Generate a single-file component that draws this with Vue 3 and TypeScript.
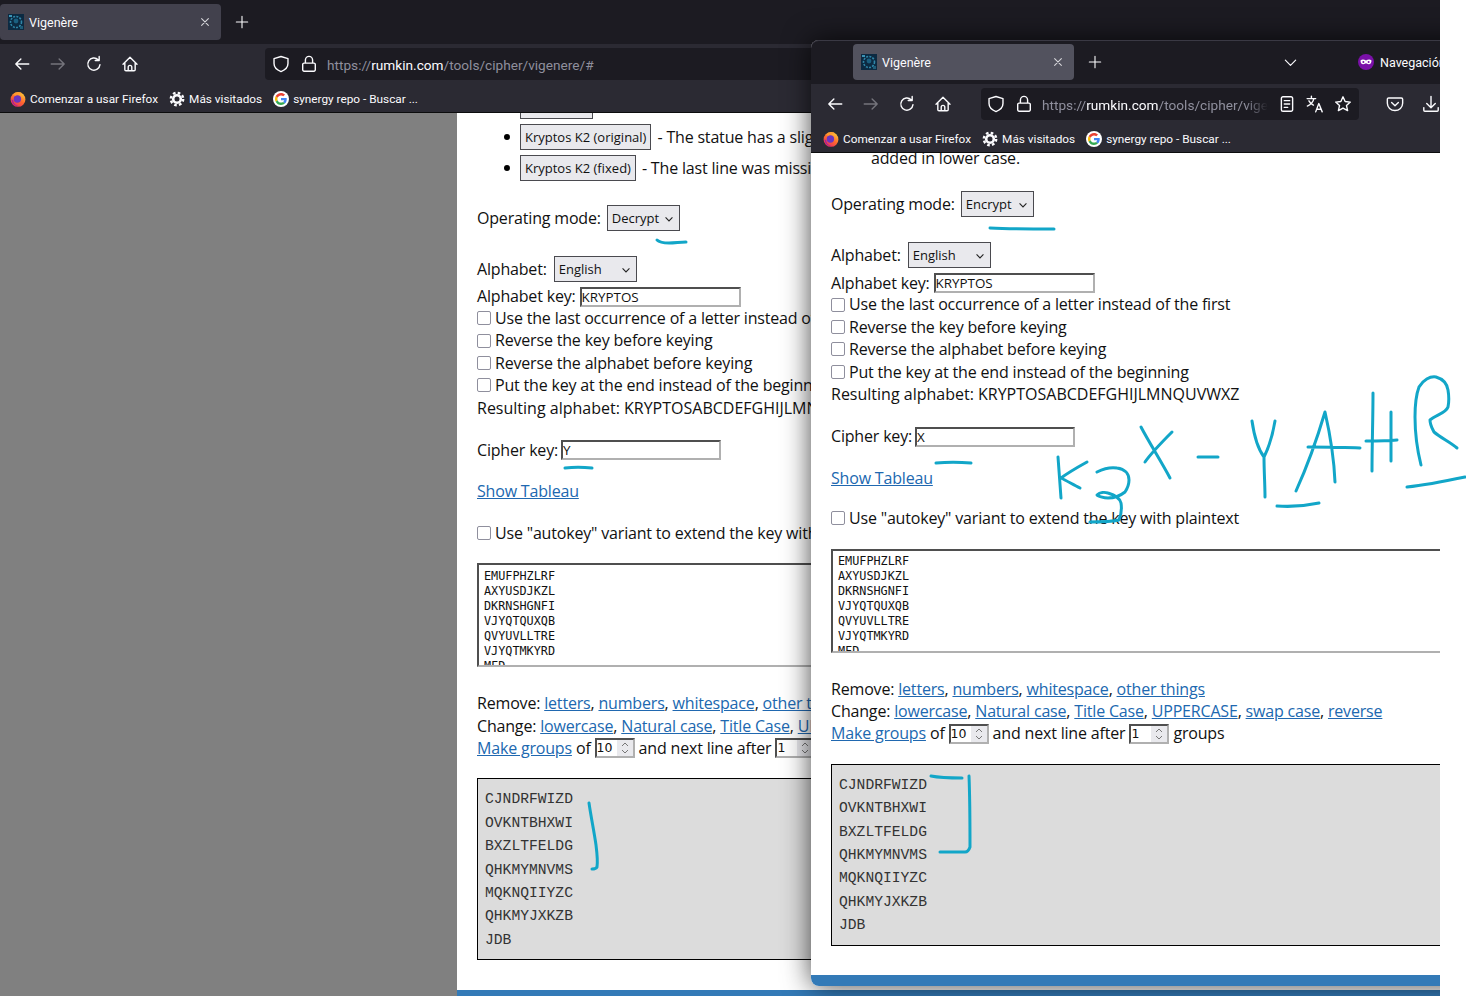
<script setup lang="ts">
const icons: Record<string, string> = {
  back: 'M14 8H2.5M7 3.5 2.5 8 7 12.5',
  forward: 'M2 8h11.5M9 3.5 13.5 8 9 12.5',
  reload: 'M13.3 8.6a5.4 5.4 0 1 1-1.6-4.4M12.6 1.4v3.5H9.1',
  home: 'M1.8 8.2 8 2l6.2 6.2M3.4 7v6a1 1 0 0 0 1 1h7.2a1 1 0 0 0 1-1V7M6.4 14v-3.2a1.6 1.6 0 0 1 3.2 0V14',
  shield: 'M8 1.3 14.2 3.2v4.4c0 3.3-2.4 5.7-6.2 7.1-3.8-1.4-6.2-3.8-6.2-7.1V3.2z',
  lock: 'M3.6 7.2h8.8a1.2 1.2 0 0 1 1.2 1.2v4.8a1.2 1.2 0 0 1-1.2 1.2H3.6a1.2 1.2 0 0 1-1.2-1.2V8.4a1.2 1.2 0 0 1 1.2-1.2zM4.8 7.2V4.4a3.2 3.2 0 0 1 6.4 0v2.8',
  star: 'M8 1.6l1.9 4.2 4.6.5-3.4 3.1 1 4.5L8 11.6l-4.1 2.3 1-4.5L1.5 6.3l4.6-.5z',
  reader: 'M4.4 1.6h7.2a1.4 1.4 0 0 1 1.4 1.4v10a1.4 1.4 0 0 1-1.4 1.4H4.4A1.4 1.4 0 0 1 3 13V3a1.4 1.4 0 0 1 1.4-1.4zM5.6 5h4.8M5.6 8h4.8M5.6 11h3',
  translate: 'M1 3.2h7.6M4.8 1v2.2M7 3.2C6.4 6 4 8.6 1.2 9.8M2.6 5.2c.9 1.7 2.4 3 4 3.8M8.6 15l2.8-7.4L14.4 15M9.6 12.6h3.8',
  pocket: 'M2.4 2.6h11.2A1.2 1.2 0 0 1 14.8 3.8V7.4a6.8 6.4 0 0 1-13.6 0V3.8A1.2 1.2 0 0 1 2.4 2.6zM5 6.6l3 3 3-3',
  download: 'M8 1.2v10M4.2 7.6 8 11.4l3.8-3.8M1.6 11.2v2.4a.9.9 0 0 0 .9.9h11a.9.9 0 0 0 .9-.9v-2.4',
  close: 'M3.5 3.5l9 9M12.5 3.5l-9 9',
  plus: 'M8 1.5v13M1.5 8h13',
  down: 'M2.5 5.5 8 11l5.5-5.5'
}

const windows = [
  { id: 'back', url: 'vigenere/#', mode: 'Decrypt', cipher: 'Y' },
  { id: 'front', url: 'vigenere/#', mode: 'Encrypt', cipher: 'X' }
]

const options = [
  'Use the last occurrence of a letter instead of the first',
  'Reverse the key before keying',
  'Reverse the alphabet before keying',
  'Put the key at the end instead of the beginning'
]

const inputLines = ['EMUFPHZLRF', 'AXYUSDJKZL', 'DKRNSHGNFI', 'VJYQTQUXQB', 'QVYUVLLTRE', 'VJYQTMKYRD', 'MFD']
const outputLines = ['CJNDRFWIZD', 'OVKNTBHXWI', 'BXZLTFELDG', 'QHKMYMNVMS', 'MQKNQIIYZC', 'QHKMYJXKZB', 'JDB']

// pen strokes drawn on top of the screenshot
const strokes = [
  'M657 240c3 3 8 3 12 3 6 0 11-1 17-1',
  'M565 468c8-1 18-1 27 0',
  'M589 803c2 14 5 28 7 42 1 8 2 16 1 22-1 2-3 2-5 2',
  'M990 228c20 1 42 1 64 1',
  'M936 463c10-1 24-1 35 0',
  'M1058 457c1 14 2 28 3 41M1087 462c-9 5-18 10-26 16 6 3 13 7 19 10',
  'M1097 472c6-3 14-5 20-4 8 1 12 6 12 12 0 5-2 9-4 12-5 4-11 6-17 6-4 0-11-2-11-3 3-3 8-3 11-2 7 2 12 6 13 10 1 6 0 12-2 17-9 2-19 2-29 2',
  'M1141 427c9 17 20 34 29 51M1172 432c-9 9-20 20-27 30',
  'M1198 457h20',
  'M1252 421c2 14 6 28 12 36 5-10 9-24 11-36M1264 457c0 14 1 28 1 40',
  'M1296 491c10-22 21-52 29-79 5 22 9 46 10 70M1308 447c17 0 35 0 52 1',
  'M1277 506c14 1 28 0 42-3',
  'M1373 393c0 26-1 52-1 78M1366 441c10 0 21 0 31-1M1391 412v49',
  'M1421 465c-4-16-6-32-6-48 0-11 1-22 4-30 4-7 11-11 17-10 7 2 11 7 12 13 1 6 1 12 0 17-2 6-12 8-18 13 0 5 2 8 4 12 7 6 16 10 23 16',
  'M1407 487c19-2 39-6 58-10',
  'M931 776c10 2 21 2 31 2M969 776c1 24 1 48 1 71-1 3-3 5-5 5-8 0-17 0-25 0'
]
</script>

<template>
  <div class="stage">
    <div class="desktop">
      <section v-for="w in windows" :key="w.id" class="window" :class="w.id">
        <div class="tabbar">
          <div class="tab">
            <svg class="favicon" viewBox="0 0 16 16">
              <rect width="16" height="16" fill="#0c2a42" />
              <circle cx="8" cy="8" r="5.5" fill="none" stroke="#2f86a8" stroke-width="1.6" stroke-dasharray="2 1.2" />
              <circle cx="8" cy="7" r="2.4" fill="#1a5f80" />
              <rect x="1" y="1" width="3" height="2" fill="#3c93b4" />
              <rect x="12" y="12" width="3" height="3" fill="#1d5c78" />
            </svg>
            <span class="tab-title">Vigenère</span>
            <svg class="ico close" viewBox="0 0 16 16"><path :d="icons.close" /></svg>
          </div>
          <svg class="ico new-tab" viewBox="0 0 16 16"><path :d="icons.plus" /></svg>
          <template v-if="w.id === 'front'">
            <svg class="ico tab-list" viewBox="0 0 16 16"><path :d="icons.down" /></svg>
            <svg class="mask" viewBox="0 0 16 16">
              <circle cx="8" cy="8" r="8" fill="#7a10a8" />
              <path d="M2.6 6.2c1.6-.9 3.6-.7 5.4.2 1.8-.9 3.800-1.100 5.400-.2.3 2-.6 4-2.600 4-1.300 0-2-1-2.800-1s-1.500 1-2.800 1c-2 0-2.900-2-2.600-4z" fill="#fff" />
              <circle cx="5.400" cy="8" r="1" fill="#7a10a8" />
              <circle cx="10.600" cy="8" r="1" fill="#7a10a8" />
            </svg>
            <span class="private">Navegación privada</span>
          </template>
        </div>

        <div class="toolbar">
          <div class="nav">
            <span class="cell"><svg class="ico" viewBox="0 0 16 16"><path :d="icons.back" /></svg></span>
            <span class="cell"><svg class="ico dim" viewBox="0 0 16 16"><path :d="icons.forward" /></svg></span>
            <span class="cell"><svg class="ico" viewBox="0 0 16 16"><path :d="icons.reload" /></svg></span>
            <span class="cell"><svg class="ico" viewBox="0 0 16 16"><path :d="icons.home" /></svg></span>
          </div>
          <div class="urlbar">
            <svg class="ico" viewBox="0 0 16 16"><path :d="icons.shield" /></svg>
            <svg class="ico" viewBox="0 0 16 16"><path :d="icons.lock" /></svg>
            <span class="url">https://<b>rumkin.com</b>/tools/cipher/{{ w.url }}</span>
            <template v-if="w.id === 'front'">
              <svg class="ico" viewBox="0 0 16 16"><path :d="icons.reader" /></svg>
              <svg class="ico" viewBox="0 0 16 16"><path :d="icons.translate" /></svg>
              <svg class="ico" viewBox="0 0 16 16"><path :d="icons.star" /></svg>
            </template>
          </div>
          <div v-if="w.id === 'front'" class="tools">
            <svg class="ico" viewBox="0 0 16 16"><path :d="icons.pocket" /></svg>
            <svg class="ico" viewBox="0 0 16 16"><path :d="icons.download" /></svg>
          </div>
        </div>

        <div class="bookmarks">
          <span class="mark ff">
            <svg class="bm-ico" viewBox="0 0 16 16">
              <defs>
                <linearGradient :id="'fx-' + w.id" x1="0.8" y1="0" x2="0.2" y2="1">
                  <stop offset="0" stop-color="#ffd23c" />
                  <stop offset="0.5" stop-color="#ff6a2c" />
                  <stop offset="1" stop-color="#e5246a" />
                </linearGradient>
              </defs>
              <circle cx="8" cy="8.400" r="7.400" :fill="'url(#fx-' + w.id + ')'" />
              <path d="M1.600 8.400C1.600 12 4.500 15 8 15c-3.200-1-4.800-3-4.800-6z" fill="#a3239a" />
              <circle cx="7.400" cy="8" r="3.700" fill="#6a35c0" />
              <path d="M3.200 3.600C5.200 .8 10 .4 12.500 2.600 10 2.100 7.200 2.800 5.800 4.700z" fill="#ff9a2e" />
            </svg>
            Comenzar a usar Firefox
          </span>
          <span class="mark gear">
            <svg class="bm-ico" viewBox="0 0 16 16">
              <circle cx="8" cy="8" r="6.200" fill="none" stroke="#fbfbfe" stroke-width="2.400" stroke-dasharray="2.600 2.270" />
              <circle cx="8" cy="8" r="3.800" fill="none" stroke="#fbfbfe" stroke-width="2.600" />
            </svg>
            Más visitados
          </span>
          <span class="mark goo">
            <svg class="bm-ico" viewBox="-8 -8 64 64">
              <circle cx="24" cy="24" r="32" fill="#fff" />
              <path fill="#EA4335" d="M24 9.500c3.540 0 6.710 1.220 9.210 3.600l6.850-6.850C35.900 2.380 30.470 0 24 0 14.620 0 6.510 5.380 2.560 13.220l7.980 6.190C12.430 13.720 17.740 9.500 24 9.500z" />
              <path fill="#4285F4" d="M46.980 24.550c0-1.570-.15-3.090-.38-4.550H24v9.020h12.940c-.58 2.960-2.260 5.480-4.780 7.180l7.730 6c4.510-4.180 7.090-10.360 7.090-17.650z" />
              <path fill="#FBBC05" d="M10.530 28.590c-.48-1.450-.76-2.990-.76-4.590s.27-3.140.76-4.590l-7.980-6.190C.92 16.460 0 20.120 0 24c0 3.880.92 7.540 2.560 10.780l7.970-6.190z" />
              <path fill="#34A853" d="M24 48c6.480 0 11.930-2.130 15.890-5.810l-7.730-6c-2.150 1.450-4.920 2.300-8.160 2.300-6.260 0-11.570-4.220-13.470-9.910l-7.980 6.190C6.510 42.620 14.620 48 24 48z" />
            </svg>
            synergy repo - Buscar ...
          </span>
        </div>

        <div class="viewport">
          <div v-if="w.id === 'back'" class="gutter"></div>
          <div class="page">
            <div class="content">
              <ul v-if="w.id === 'back'" class="samples">
                <li><span class="btn blank"></span></li>
                <li><span class="btn">Kryptos K2 (original)</span><span class="dash">- The statue has a slight error</span></li>
                <li><span class="btn">Kryptos K2 (fixed)</span><span class="dash">- The last line was missing</span></li>
              </ul>
              <p v-else class="leftover">added in lower case.</p>

              <div class="row mode">
                Operating mode:
                <span class="select mode-select">{{ w.mode }}<svg class="arrow" viewBox="0 0 16 16"><path :d="icons.down" /></svg></span>
              </div>
              <div class="row alpha">
                Alphabet:
                <span class="select alpha-select">English<svg class="arrow" viewBox="0 0 16 16"><path :d="icons.down" /></svg></span>
              </div>
              <div class="row akey">
                Alphabet key:
                <input class="field" type="text" value="KRYPTOS" readonly />
              </div>
              <label v-for="o in options" :key="o" class="check">
                <input type="checkbox" />{{ o }}
              </label>
              <div class="line result">Resulting alphabet: KRYPTOSABCDEFGHIJLMNQUVWXZ</div>
              <div class="row ckey">
                Cipher key:
                <input class="field" type="text" :value="w.cipher" readonly />
              </div>
              <div class="line tableau"><a>Show Tableau</a></div>
              <label class="check autokey">
                <input type="checkbox" />Use "autokey" variant to extend the key with plaintext
              </label>
              <div class="textarea">
                <div v-for="(l, i) in inputLines" :key="i">{{ l }}</div>
              </div>
              <div class="line remove">Remove: <a>letters</a>, <a>numbers</a>, <a>whitespace</a>, <a>other things</a></div>
              <div class="line">Change: <a>lowercase</a>, <a>Natural case</a>, <a>Title Case</a>, <a>UPPERCASE</a>, <a>swap case</a>, <a>reverse</a></div>
              <div class="line groups">
                <a>Make groups</a> of
                <span class="number"><span class="num-val">10</span><span class="spin"><svg viewBox="0 0 10 14"><path d="M2 5l3-3 3 3M2 9l3 3 3-3" /></svg></span></span>
                and next line after
                <span class="number"><span class="num-val">1</span><span class="spin"><svg viewBox="0 0 10 14"><path d="M2 5l3-3 3 3M2 9l3 3 3-3" /></svg></span></span>
                groups
              </div>
              <div class="output">
                <div v-for="(l, i) in outputLines" :key="i">{{ l }}</div>
              </div>
            </div>
            <div class="footer"></div>
          </div>
        </div>
      </section>
    </div>

    <svg class="pen" viewBox="0 0 1466 996">
      <path v-for="(d, i) in strokes" :key="i" :d="d" />
    </svg>
  </div>
</template>

<style>
html, body { background: #fff; overflow: hidden; }
</style>

<style scoped>
.stage { position: relative; width: 1466px; height: 996px; overflow: hidden; background: #fff; }
.desktop { position: relative; width: 1440px; height: 996px; overflow: hidden; }
.pen { position: absolute; left: 0; top: 0; width: 1466px; height: 996px; pointer-events: none; }
.pen path { fill: none; stroke: #12a6c8; stroke-width: 3; stroke-linecap: round; stroke-linejoin: round; }

.window { position: absolute; display: flex; flex-direction: column; background: #fff; font-family: "Open Sans", sans-serif; overflow: hidden; }
.window.back { left: 0; top: 0; width: 1440px; height: 996px; }
.window.front { left: 811px; top: 40px; width: 660px; height: 946px; border-radius: 8px 0 0 8px; overflow: visible; box-shadow: 0 0 28px rgba(0, 0, 0, .72); }

.tabbar { height: 44px; flex: none; display: flex; align-items: center; background: #1c1b22; color: #fbfbfe; font-family: Roboto, sans-serif; font-size: 12.5px; }
.front .tabbar { padding-left: 42px; border-radius: 8px 0 0 0; box-shadow: inset 0 1px 0 #3a3944; }
.tab { height: 36px; display: flex; align-items: center; border-radius: 4px; background: #42414d; width: 221px; padding: 0 10px 0 8px; box-sizing: border-box; flex: none; }
.front .tab { background: #52525e; }
.favicon { width: 16px; height: 16px; margin-right: 5px; flex: none; }
.tab-title { flex: 1; }
.ico { width: 18px; height: 18px; flex: none; }
.ico path { fill: none; stroke: #fbfbfe; stroke-width: 1.25; stroke-linecap: round; stroke-linejoin: round; }
.ico.dim path { stroke: #75747c; }
.ico.close { width: 12px; height: 12px; }
.ico.close path { stroke-width: 1.4; stroke: #d8d8dc; }
.new-tab { width: 14px; height: 14px; margin-left: 14px; }
.tab-list { margin-left: 181px; width: 15px; height: 15px; }
.mask { width: 16px; height: 16px; margin-left: 60px; flex: none; }
.private { margin-left: 6px; white-space: nowrap; }

.toolbar { height: 40px; flex: none; display: flex; align-items: center; background: #2b2a33; }
.nav { display: flex; padding-left: 4px; }
.front .nav { padding-left: 6px; }
.cell { width: 36px; height: 32px; display: flex; align-items: center; justify-content: center; }
.urlbar { height: 32px; flex: 1; margin-left: 117px; padding-left: 7px; display: flex; align-items: center; gap: 10px; background: #1c1b22; border-radius: 4px; overflow: hidden; }
.front .urlbar { flex: none; width: 378px; margin-left: 20px; padding-left: 6px; box-sizing: border-box; }
.url { font-family: Roboto, sans-serif; font-size: 13.65px; line-height: 20px; padding-top: 2px; color: #8f8f9d; white-space: nowrap; margin-left: -1px; }
.url b { color: #fbfbfe; font-weight: 400; }
.front .url { width: 226px; overflow: hidden; flex: none; -webkit-mask-image: linear-gradient(90deg, #000 90%, transparent); mask-image: linear-gradient(90deg, #000 90%, transparent); }
.tools { display: flex; gap: 18px; margin-left: 27px; }

.bookmarks { height: 29px; flex: none; display: flex; align-items: center; background: #2b2a33; border-bottom: 1px solid #0c0c0d; box-sizing: border-box; padding: 1px 0 0 10px; color: #fbfbfe; font-family: Roboto, sans-serif; font-size: 11.8px; }
.front .bookmarks { padding-left: 12px; }
.mark { display: flex; align-items: center; gap: 4px; white-space: nowrap; }
.bm-ico { width: 16px; height: 16px; flex: none; }
.mark.gear { margin-left: 11px; }
.mark.goo { margin-left: 11px; }

.viewport { flex: 1; min-height: 0; display: flex; overflow: hidden; }
.front .viewport { border-radius: 0 0 0 8px; }
.gutter { width: 457px; flex: none; background: #808080; }
.page { flex: 1; min-width: 0; background: #fff; overflow: hidden; display: flex; flex-direction: column; }
.content { width: 943px; padding-left: 20px; font-size: 16px; line-height: 22.4px; letter-spacing: -.18px; color: #111; flex: none; }
.back .content { height: 877px; }
.front .content { height: 822px; }

.samples { margin: -20px 0 0; padding: 0 0 0 43px; list-style: none; }
.samples li { height: 26px; margin-bottom: 5px; display: flex; align-items: center; position: relative; }
.samples li::before { content: ""; position: absolute; left: -16px; top: 10px; width: 6px; height: 6px; border-radius: 50%; background: #000; }
.samples li:first-child::before { display: none; }
.btn { height: 26px; box-sizing: border-box; padding: 0 4px; border: 1px solid #4a4a4f; background: #e9e9ed; font-size: 13px; letter-spacing: 0; line-height: 24px; white-space: nowrap; }
.btn.blank { width: 73px; }
.dash { margin-left: 6px; white-space: nowrap; }
.leftover { margin: -6px 0 0 40px; }

.row { display: flex; align-items: center; gap: 6px; white-space: nowrap; }
.mode { height: 26px; margin-top: 22px; }
.back .mode { margin-top: 24px; }
.alpha { height: 26px; margin-top: 25px; gap: 7px; }
.akey { height: 21px; margin-top: 4px; gap: 4px; }
.ckey { height: 22.4px; margin-top: 20px; gap: 3px; }
.select { height: 26px; box-sizing: border-box; border: 1px solid #4a4a4f; background: #e9e9ed; display: flex; align-items: center; padding-left: 4px; font-size: 13px; letter-spacing: 0; position: relative; }
.mode-select { width: 73px; }
.alpha-select { width: 83px; }
.arrow { position: absolute; right: 5px; top: 8px; width: 10px; height: 10px; }
.arrow path { fill: none; stroke: #222; stroke-width: 1.8; }
.field { width: 161px; height: 20px; box-sizing: border-box; padding: 0; margin: 0; border: 2px solid; border-color: #4f4f4f #b0b0b0 #b0b0b0 #4f4f4f; font: 13.4px "Open Sans", sans-serif; color: #111; background: #fff; outline: none; }
.ckey .field { width: 160px; }
.check { display: flex; align-items: center; height: 22.4px; white-space: nowrap; }
.check input { appearance: none; -webkit-appearance: none; width: 12px; height: 12px; margin: 0 4px 0 0; box-sizing: content-box; border: 1px solid #8f8f9d; border-radius: 2px; background: #fff; flex: none; }
.result { letter-spacing: 0; }
.tableau { margin-top: 19px; }
.autokey { margin-top: 18px; }
.back .autokey { margin-top: 19px; }
a { color: #2068b0; text-decoration: underline; }

.textarea { height: 104px; box-sizing: border-box; margin-top: 19px; padding: 4px 0 0 5px; overflow: hidden; border: 2px solid; border-color: #4f4f4f #b0b0b0 #b0b0b0 #4f4f4f; font: 11.8px/15px "DejaVu Sans Mono", monospace; letter-spacing: 0; color: #111; }
.front .textarea { padding-top: 3px; }
.remove { margin-top: 25px; }
.groups { display: flex; align-items: center; gap: 4px; white-space: nowrap; }
.number { width: 40px; height: 20px; box-sizing: border-box; display: flex; border: 2px solid; border-color: #4f4f4f #b0b0b0 #b0b0b0 #4f4f4f; background: #fff; font: 12.5px/16px "DejaVu Sans", sans-serif; letter-spacing: 0; }
.num-val { flex: 1; }
.spin { width: 16px; background: #e9e9ed; display: flex; align-items: center; justify-content: center; }
.spin svg { width: 10px; height: 14px; }
.spin path { fill: none; stroke: #777; stroke-width: 1; }
.output { height: 182px; box-sizing: border-box; margin-top: 19px; padding: 9px 7px; border: 1px solid #000; background: #dcdcdc; font: 14.67px/23.4px "Liberation Mono", monospace; letter-spacing: 0; color: #333; }
.footer { flex: 1; min-height: 11px; background: #337ab7; }
</style>
